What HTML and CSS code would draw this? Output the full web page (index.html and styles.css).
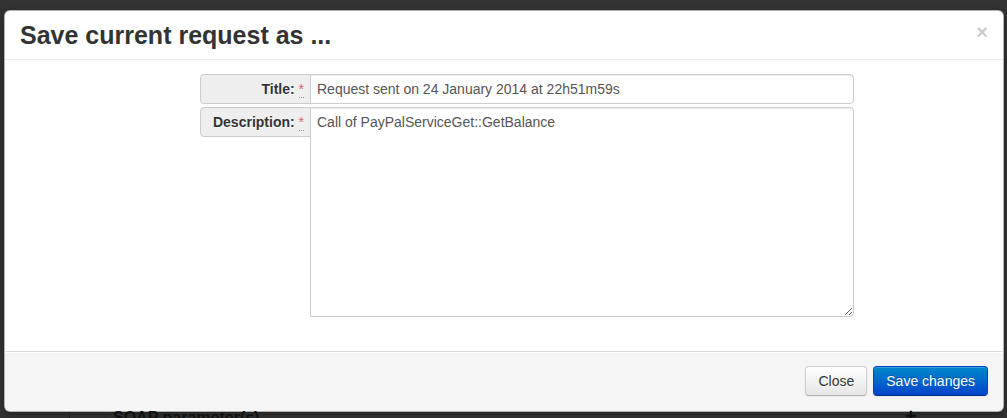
FILE: index.html
```html
<!DOCTYPE html>
<html>
<head>
<meta charset="utf-8">
<title>Save current request</title>
<link rel="stylesheet" href="styles.css">
</head>
<body>
<div class="modal">
  <div class="modal-header">
    <button class="close" type="button">×</button>
    <h3>Save current request as ...</h3>
  </div>
  <div class="modal-body">
    <form class="save-form">
      <div class="row">
        <label class="add-on">Title: <abbr title="required">*</abbr></label>
        <input class="field" type="text" value="Request sent on 24 January 2014 at 22h51m59s">
      </div>
      <div class="row">
        <label class="add-on">Description: <abbr title="required">*</abbr></label>
        <textarea class="field area">Call of PayPalServiceGet::GetBalance</textarea>
      </div>
    </form>
  </div>
  <div class="modal-footer">
    <button class="btn" type="button">Close</button>
    <button class="btn btn-primary" type="button">Save changes</button>
  </div>
</div>
<div class="page-behind">
  <span class="rule dotted"></span>
  <span class="rule solid"></span>
  <span class="behind-title">SOAP parameter(s)</span>
  <span class="behind-plus">+</span>
</div>
</body>
</html>
```

FILE: styles.css
```css
html, body {
  margin: 0;
  padding: 0;
  height: 100%;
  overflow: hidden;
}
body {
  background: #323232;
  font-family: "Liberation Sans", Arial, sans-serif;
  font-size: 14px;
  line-height: 20px;
  color: #333;
}
.modal {
  box-sizing: border-box;
  width: 1000px;
  margin: 10px 0 0 4px;
  background: #fff;
  border: 1px solid rgba(0, 0, 0, 0.3);
  border-radius: 6px;
  box-shadow: 0 3px 7px rgba(0, 0, 0, 0.3);
}
.modal-header {
  padding: 9px 15px;
  border-bottom: 1px solid #eee;
}
.modal-header h3 {
  margin: 0;
  font-size: 25px;
  line-height: 30px;
  font-weight: bold;
  color: #333;
}
.close {
  float: right;
  margin-top: 2px;
  padding: 0;
  background: transparent;
  border: 0;
  font-family: "Liberation Sans", Arial, sans-serif;
  font-size: 20px;
  font-weight: bold;
  line-height: 20px;
  color: #000;
  opacity: 0.2;
  text-shadow: 0 1px 0 #fff;
}
.modal-body {
  padding: 15px;
}
.save-form {
  margin: -1px 0 19px 180px;
  display: flex;
  flex-direction: column;
  gap: 3px;
}
.row {
  display: flex;
  align-items: flex-start;
}
.add-on {
  box-sizing: border-box;
  width: 111px;
  height: 30px;
  margin-right: -1px;
  padding: 4px 6px 4px 5px;
  text-align: right;
  font-weight: bold;
  color: #333;
  background: #eee;
  border: 1px solid #ccc;
  border-radius: 4px 0 0 4px;
  text-shadow: 0 1px 0 #fff;
  white-space: nowrap;
}
.add-on abbr {
  color: #d65c6a;
  font-weight: normal;
  text-decoration: none;
  border-bottom: 1px dotted #999;
  cursor: help;
}
.field {
  box-sizing: border-box;
  width: 544px;
  height: 30px;
  margin: 0;
  padding: 4px 6px;
  font-family: "Liberation Sans", Arial, sans-serif;
  font-size: 14px;
  line-height: 20px;
  color: #555;
  background: #fff;
  border: 1px solid #ccc;
  border-radius: 0 4px 4px 0;
  box-shadow: inset 0 1px 1px rgba(0, 0, 0, 0.075);
}
.area {
  height: 210px;
  resize: vertical;
}
.modal-footer {
  display: flex;
  justify-content: flex-end;
  gap: 6px;
  padding: 14px 15px 15px;
  background: #f5f5f5;
  border-top: 1px solid #ddd;
  border-radius: 0 0 6px 6px;
  box-shadow: inset 0 1px 0 #fff;
}
.btn {
  box-sizing: border-box;
  height: 30px;
  padding: 4px 12px;
  font-family: "Liberation Sans", Arial, sans-serif;
  font-size: 14px;
  line-height: 20px;
  color: #333;
  text-shadow: 0 1px 1px rgba(255, 255, 255, 0.75);
  background: linear-gradient(to bottom, #fff, #e6e6e6);
  border: 1px solid #ccc;
  border-bottom-color: #b3b3b3;
  border-radius: 4px;
  box-shadow: inset 0 1px 0 rgba(255, 255, 255, 0.2), 0 1px 2px rgba(0, 0, 0, 0.05);
}
.btn-primary {
  color: #fff;
  text-shadow: 0 -1px 0 rgba(0, 0, 0, 0.25);
  background: linear-gradient(to bottom, #0088cc, #0044cc);
  border-color: #0044cc #0044cc #002a80;
}
.page-behind {
  position: relative;
  height: 20px;
  margin-top: 0;
}
.rule {
  position: absolute;
  top: 0;
  bottom: 0;
}
.rule.dotted {
  left: 69px;
  border-left: 1px dotted #1e1e1e;
}
.rule.solid {
  left: 105px;
  border-left: 1px solid #282828;
}
.behind-title {
  position: absolute;
  left: 113px;
  top: -4px;
  font-size: 16px;
  font-weight: bold;
  color: #111;
}
.behind-plus {
  position: absolute;
  left: 905px;
  top: -6px;
  font-size: 20px;
  font-weight: bold;
  color: #0c0c0c;
}
```
